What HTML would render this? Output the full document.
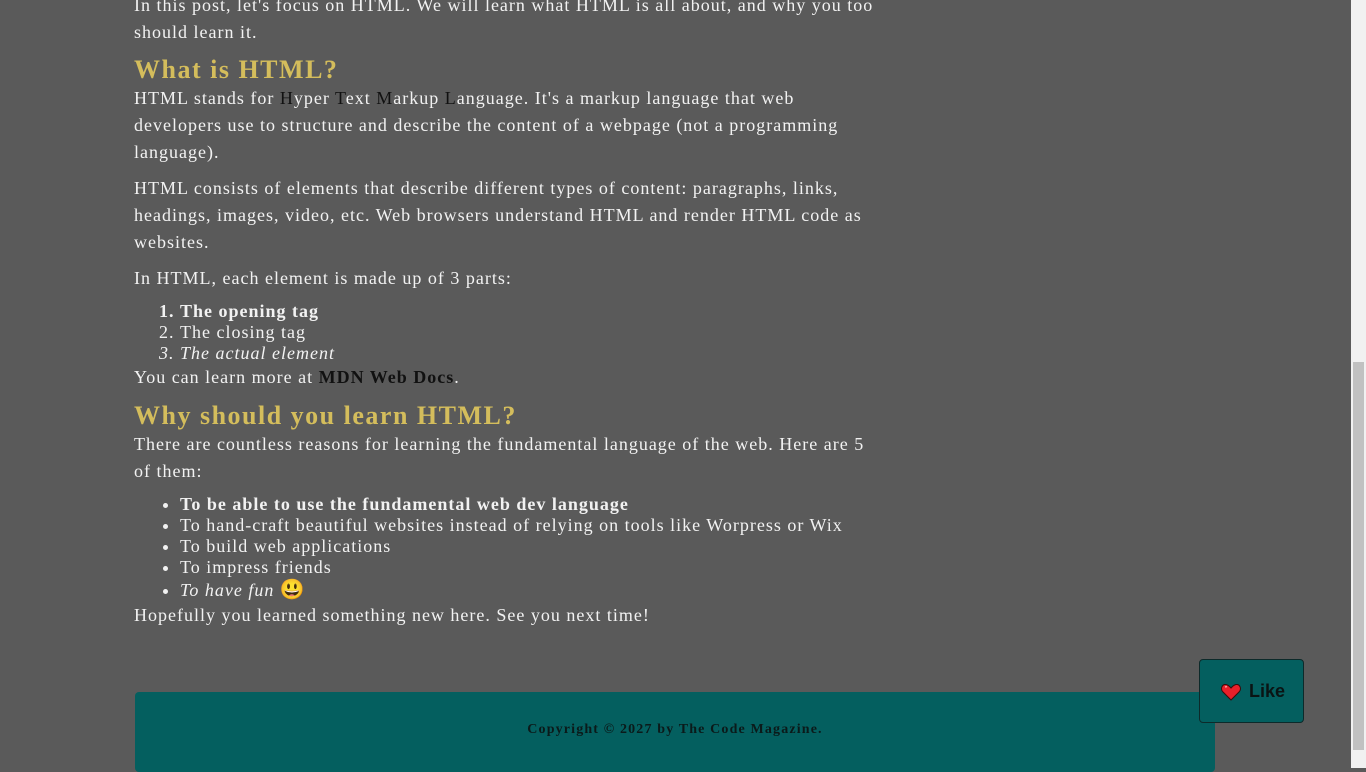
<!DOCTYPE html>
<html><head><meta charset="utf-8"><style>
html,body{margin:0;padding:0;width:1366px;height:768px;overflow:hidden;background:#5a5a5a;}
body{font-family:"Liberation Serif",serif;color:#f2f2f2;font-size:18px;letter-spacing:1px;}
.a{position:absolute;left:134px;width:745px;margin:0;line-height:27px;}
h2{position:absolute;left:134px;margin:0;font-size:26px;font-weight:bold;color:#d4bd5c;letter-spacing:1.5px;line-height:30px;}
.k{color:#111;}
ul,ol{position:absolute;left:134px;margin:0;padding-left:46px;line-height:21px;}
.sb{position:absolute;right:0;top:0;width:15px;height:768px;background:#f1f1f1;}
.th{position:absolute;right:2px;width:11px;top:362px;height:388px;background:#c1c1c1;}
.foot{position:absolute;left:135px;top:692px;width:1080px;height:80px;background:#045f5f;border-radius:4px;text-align:center;color:#0b1a1a;font-weight:bold;font-size:14px;letter-spacing:1.15px;line-height:76px;}
.like{position:absolute;left:1199px;top:659px;width:105px;height:64px;background:#045f5f;border:1px solid #0d2a2a;border-radius:4px;box-sizing:border-box;font-family:"Liberation Sans",sans-serif;font-weight:bold;font-size:18px;color:#0a1414;letter-spacing:0;}
</style></head><body>
<p class="a" style="top:-8px">In this post, let's focus on HTML. We will learn what HTML is all about, and why you too should learn it.</p>
<h2 style="top:55px">What is HTML?</h2>
<p class="a" style="top:85px">HTML stands for <span class="k">H</span>yper <span class="k">T</span>ext <span class="k">M</span>arkup <span class="k">L</span>anguage. It's a markup language that web developers use to structure and describe the content of a webpage (not a programming language).</p>
<p class="a" style="top:175px">HTML consists of elements that describe different types of content: paragraphs, links, headings, images, video, etc. Web browsers understand HTML and render HTML code as websites.</p>
<p class="a" style="top:265px">In HTML, each element is made up of 3 parts:</p>
<ol style="top:301px;padding-left:46px"><li style="font-weight:bold">The opening tag</li><li>The closing tag</li><li style="font-style:italic">The actual element</li></ol>
<p class="a" style="top:364px">You can learn more at <span class="k" style="font-weight:bold">MDN Web Docs</span>.</p>
<h2 style="top:401px">Why should you learn HTML?</h2>
<p class="a" style="top:431px">There are countless reasons for learning the fundamental language of the web. Here are 5 of them:</p>
<ul style="top:494px"><li style="font-weight:bold">To be able to use the fundamental web dev language</li><li>To hand-craft beautiful websites instead of relying on tools like Worpress or Wix</li><li>To build web applications</li><li>To impress friends</li><li style="font-style:italic;line-height:24px">To have fun <span style="font-style:normal;font-size:20px">😃</span></li></ul>
<p class="a" style="top:602px">Hopefully you learned something new here. See you next time!</p>
<div class="foot">Copyright © 2027 by The Code Magazine.</div>
<div class="like"><svg style="position:absolute;left:21px;top:24px" width="20" height="17" viewBox="0 0 20 17"><path d="M10 16 L2 8 C-1 5 1 0 5 0.5 C7.5 1 9 3 10 4 C11 3 12.5 1 15 0.5 C19 0 21 5 18 8 Z" fill="#e8202a" stroke="#3a0a0a" stroke-width="1"/><path d="M4 3 L6 2.5" stroke="#ff9a9a" stroke-width="1.5"/></svg><span style="position:absolute;left:49px;top:21px">Like</span></div>
<div class="sb"><div class="th"></div></div>
</body></html>
